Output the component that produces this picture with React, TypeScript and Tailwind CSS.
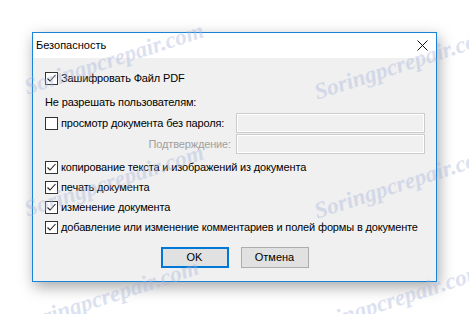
import React from "react";

const font = { fontFamily: '"Liberation Sans", Arial, sans-serif' };

function Box({ checked }: { checked: boolean }) {
  return (
    <span className="w-[13px] h-[13px] border border-[#333333] bg-white flex items-center justify-center shrink-0">
      {checked && (
        <svg width="11" height="11" viewBox="0 0 11 11">
          <path d="M1.5 5.5 L4 8 L9.5 2" fill="none" stroke="#222" strokeWidth="1.1" />
        </svg>
      )}
    </span>
  );
}

function Check({ checked, label }: { checked: boolean; label: string }) {
  return (
    <div className="h-5 flex items-center gap-[3px]">
      <Box checked={checked} />
      <span className="text-[11px] tracking-[-0.15px] text-black whitespace-nowrap">{label}</span>
    </div>
  );
}

function Field() {
  return <div className="w-[189px] h-5 border border-[#cccccc] bg-[#f0f0f0] shadow-[inset_0_0_0_1px_white]" />;
}

// watermark spots (start point of the text line)
const marks = [
  "left-[25px] top-[75px]",
  "left-[315px] top-[80px]",
  "left-[25px] top-[197px]",
  "left-[315px] top-[199px]",
  "left-[20px] top-[312px]",
  "left-[305px] top-[316px]",
];

export default function App() {
  return (
    <div className="w-[469px] h-[314px] bg-white relative overflow-hidden" style={font}>
      <div className="ml-[32px] mt-[32px] w-[405px] h-[250px] border border-[#1883d7] bg-[#f0f0f0] flex flex-col shadow-[2px_5px_14px_rgba(0,0,0,0.35)]">
        <div className="h-[25px] bg-white flex items-center justify-between pl-[3px] pr-[8px]">
          <span className="text-[11px] text-black">Безопасность</span>
          <svg width="11" height="11" viewBox="0 0 11 11">
            <path d="M0.5 0.5 L10.5 10.5 M10.5 0.5 L0.5 10.5" stroke="#111" strokeWidth="1" />
          </svg>
        </div>
        <div className="flex-1 flex flex-col pl-[12px] pr-[11px] pt-[10px]">
          <Check checked label="Зашифровать Файл PDF" />
          <div className="h-5 mt-1 flex items-center text-[11px] tracking-[-0.15px] text-black">Не разрешать пользователям:</div>
          <div className="mt-[1px] flex items-center">
            <div className="w-[191px]">
              <Check checked={false} label="просмотр документа без пароля:" />
            </div>
            <Field />
          </div>
          <div className="mt-[1px] flex items-center">
            <div className="w-[191px] pr-[5px] text-right text-[11px] tracking-[-0.15px] text-[#a0a0a0]">Подтверждение:</div>
            <Field />
          </div>
          <div className="mt-[3px]">
            <Check checked label="копирование текста и изображений из документа" />
            <Check checked label="печать документа" />
            <Check checked label="изменение документа" />
            <Check checked label="добавление или изменение комментариев и полей формы в документе" />
          </div>
          <div className="mt-[10px] flex justify-center gap-[12px] pr-[1px]">
            <button className="w-[68px] h-[21px] border-2 border-[#0078d7] bg-[#e1e1e1] text-[11px] text-black">OK</button>
            <button className="w-[68px] h-[21px] border border-[#adadad] bg-[#e1e1e1] text-[11px] text-black">Отмена</button>
          </div>
        </div>
      </div>
      {marks.map((m) => (
        <span
          key={m}
          className={`absolute ${m} h-[26px] leading-[26px] -rotate-[18deg] origin-left text-[23px] italic font-bold text-[#aab6dc] opacity-40 pointer-events-none whitespace-nowrap`}
          style={{ fontFamily: '"Liberation Serif", serif' }}
        >
          Soringpcrepair.com
        </span>
      ))}
    </div>
  );
}
